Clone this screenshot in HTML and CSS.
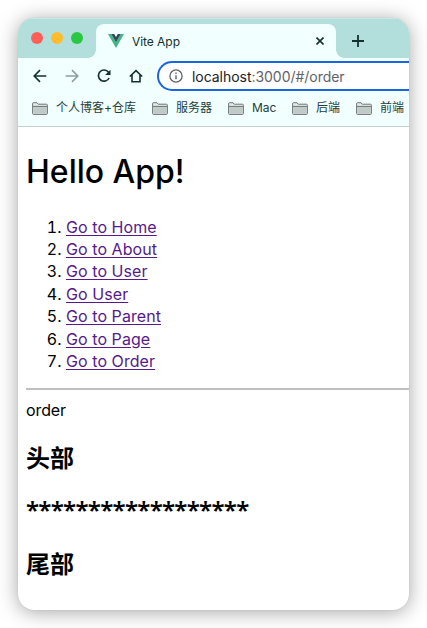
FILE: index.html
```html
<!DOCTYPE html>
<html lang="zh-CN">
<head>
<meta charset="utf-8">
<title>Vite App</title>
<link rel="stylesheet" href="styles.css">
</head>
<body>
<svg width="0" height="0" class="defs">
  <symbol id="folder" viewBox="0 0 16 13">
    <path d="M.6 11.4V1.8Q.6.7 1.6.7H5l1.2 1.5h8.2q1 0 1 1v8.2q0 1-1 1H1.6q-1 0-1-1Z" fill="#e3eae9" stroke="#6d7473"/>
    <path d="M1.2 4.5h13.6v7.3H1.2Z" fill="#c0cac8"/>
    <path d="M1 4.4h14" stroke="#6d7473"/>
  </symbol>
</svg>
<div class="window">
  <div class="tabstrip">
    <div class="lights"><i class="red"></i><i class="yellow"></i><i class="green"></i></div>
    <div class="tab">
      <svg class="vue" width="16" height="14" viewBox="0 0 16 14"><path d="M0 0h3.2L8 8.3 12.8 0H16L8 14Z" fill="#41b883"/><path d="M3.2 0h3L8 3.1 9.8 0h3L8 8.3Z" fill="#35495e"/></svg>
      <span class="title">Vite App</span>
      <svg class="close" width="8" height="8" viewBox="0 0 8 8"><path d="M.5.5l7 7M7.5.5l-7 7" stroke="#12302e" stroke-width="1.6"/></svg>
    </div>
    <svg class="plus" width="12" height="12" viewBox="0 0 12 12"><path d="M6 0v12M0 6h12" stroke="#12302e" stroke-width="1.8"/></svg>
  </div>
  <div class="toolbar">
    <svg width="14" height="14" viewBox="0 0 14 14" fill="none" stroke="#12302e" stroke-width="1.6"><path d="M13.3 7H1.4M7 1.1L1.2 7 7 12.9"/></svg>
    <svg width="14" height="14" viewBox="0 0 14 14" fill="none" stroke="#8ba09e" stroke-width="1.6"><path d="M.7 7h11.9M7 1.1L12.8 7 7 12.9"/></svg>
    <svg width="14" height="14" viewBox="0 0 14 14"><path d="M11.5 3.2A5.6 5.6 0 1 0 12.1 9" fill="none" stroke="#12302e" stroke-width="1.7"/><path d="M13.5.7V6H8.2Z" fill="#12302e"/></svg>
    <svg width="14" height="14" viewBox="0 0 14 14" fill="none" stroke="#12302e" stroke-width="1.6"><path d="M.8 7.5L7 1.6l6.2 5.9M3 6v6.7h8V6"/></svg>
    <div class="omnibox">
      <svg width="14" height="14" viewBox="0 0 14 14"><circle cx="7" cy="7" r="6.1" fill="none" stroke="#5f6368" stroke-width="1.3"/><path d="M7 6.2v4M7 3.5v1.4" stroke="#5f6368" stroke-width="1.4"/></svg>
      <span class="url">localhost<span>:3000/#/order</span></span>
    </div>
  </div>
  <div class="bookmarks">
    <div class="bm b1"><svg width="16" height="13"><use href="#folder"/></svg><span>个人博客+仓库</span></div>
    <div class="bm b2"><svg width="16" height="13"><use href="#folder"/></svg><span>服务器</span></div>
    <div class="bm b3"><svg width="16" height="13"><use href="#folder"/></svg><span>Mac</span></div>
    <div class="bm b4"><svg width="16" height="13"><use href="#folder"/></svg><span>后端</span></div>
    <div class="bm"><svg width="16" height="13"><use href="#folder"/></svg><span>前端</span></div>
  </div>
  <main>
    <h1>Hello App!</h1>
    <ol>
      <li><a href="#/">Go to Home</a></li>
      <li><a href="#/about">Go to About</a></li>
      <li><a href="#/user">Go to User</a></li>
      <li><a href="#/user">Go User</a></li>
      <li><a href="#/parent">Go to Parent</a></li>
      <li><a href="#/page">Go to Page</a></li>
      <li><a href="#/order">Go to Order</a></li>
    </ol>
    <hr>
    <div class="order">order</div>
    <h2>头部</h2>
    <h2 class="stars">******************</h2>
    <h2>尾部</h2>
  </main>
</div>
</body>
</html>
```
FILE: styles.css
```css
* { box-sizing: border-box; }
body { margin: 0; padding: 18px; width: 427px; height: 628px; overflow: hidden; background: #fff; font-family: Inter, "Noto Sans CJK SC", sans-serif; }
svg { display: block; flex: none; }
.defs { position: absolute; }
.window { width: 391px; height: 592px; border-radius: 16px; overflow: hidden; background: #fff; box-shadow: 0 0 1px rgba(0,0,0,.2), 0 2px 20px rgba(0,0,0,.36); }
.tabstrip { height: 40px; background: #b2dfdc; display: flex; align-items: flex-end; box-shadow: inset 0 1px #c7e8e5; }
.lights { display: flex; gap: 8px; width: 78px; padding-left: 13px; align-self: center; }
.lights i { width: 12px; height: 12px; border-radius: 50%; }
.red { background: #ff5f57; }
.yellow { background: #febc2e; }
.green { background: #28c840; }
.tab { position: relative; width: 240px; height: 34px; border-radius: 8px 8px 0 0; background: #f1fffe; display: flex; align-items: center; padding: 0 12px; }
.tab::before, .tab::after { content: ""; position: absolute; bottom: 0; width: 8px; height: 8px; }
.tab::before { left: -8px; background: radial-gradient(circle at 0 0, transparent 7.5px, #f1fffe 8px); }
.tab::after { right: -8px; background: radial-gradient(circle at 100% 0, transparent 7.5px, #f1fffe 8px); }
.title { margin-left: 8px; font-size: 12px; color: #12302e; flex: 1; letter-spacing: -.05px; }
.plus { margin: 0 0 11px 16px; }
.toolbar { height: 36px; background: #f1fffe; display: flex; align-items: center; gap: 18px; padding-left: 15px; }
.omnibox { flex: 1; margin-left: -4px; height: 30px; border: 2px solid #1b66dc; border-right: 0; border-radius: 15px 0 0 15px; background: #fff; display: flex; align-items: center; padding-left: 10px; gap: 9px; }
.url { font-size: 14px; letter-spacing: -.04px; color: #202124; white-space: nowrap; }
.url span { color: #5f6368; }
.bookmarks { height: 33px; background: #f1fffe; border-bottom: 1px solid #c3d2d1; display: flex; padding: 0 0 4px 14px; align-items: center; }
.bm { display: flex; align-items: center; gap: 8px; font-size: 12px; line-height: 18px; color: #24403d; white-space: nowrap; flex: none; }
.b1 { width: 120px; }
.b2 { width: 76px; }
.b3, .b4 { width: 64px; }
main { padding-left: 8px; color: #000; font-size: 16px; }
h1 { margin: 22px 0 0; font-size: 32px; line-height: 45px; font-weight: 550; letter-spacing: 0; }
ol { margin: 21.5px 0 0; padding-left: 40px; line-height: 22.45px; letter-spacing: .07px; }
a { color: #551a8b; text-decoration: underline; text-underline-offset: 2px; }
hr { border: 0; height: 2px; background: #c0c0c0; margin: 15.4px 0 8.5px; }
.order { line-height: 22px; letter-spacing: -.1px; }
h2 { margin: 21px 0 0; font-size: 24px; line-height: 33px; font-weight: 600; }
h2.stars { margin-top: 18px; font-family: "Noto Sans", sans-serif; letter-spacing: -.74px; }
h2.stars + h2 { margin-top: 22px; }
```
